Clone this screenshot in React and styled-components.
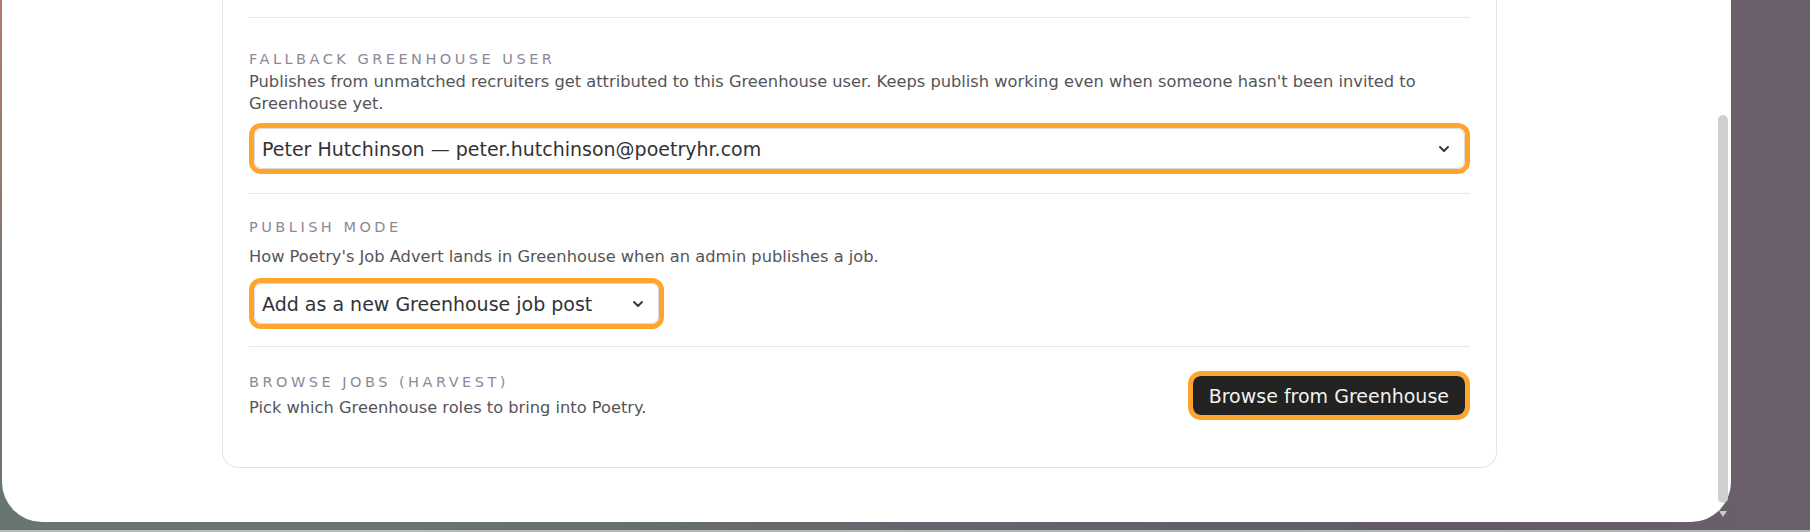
import React from "react";
import styled, { createGlobalStyle } from "styled-components";

const GlobalStyle = createGlobalStyle`
  html, body {
    margin: 0;
    padding: 0;
  }
  body {
    font-family: "DejaVu Sans", "Noto Sans", sans-serif;
    background: #66756f;
    overflow: hidden;
  }
  *, *::before, *::after {
    box-sizing: border-box;
  }
`;

/* desktop wallpaper peeking around the settings sheet */
const Backdrop = styled.div`
  display: flex;
  width: 1810px;
  height: 532px;
  padding: 0 79px 10px 2px;
  background:
    linear-gradient(0deg, rgba(200, 205, 203, 0.8) 0 2px, transparent 2px),
    linear-gradient(180deg, #b47c69 0%, #987a70 30%, #71766f 60%, #66756f 100%) left top / 24px 100% no-repeat,
    linear-gradient(90deg, #67766f 0%, #6a7571 22%, #64626a 58%, #625a66 80%, #6b5f6b 100%);
`;

const Sheet = styled.div`
  flex: 1;
  display: flex;
  background: #ffffff;
  border-radius: 0 0 40px 40px;
`;

const ScrollArea = styled.div`
  flex: 1;
  min-width: 0;
  display: flex;
  justify-content: center;
  align-items: flex-start;
`;

const ScrollTrack = styled.div`
  width: 14px;
  display: flex;
  flex-direction: column;
  align-items: center;
  gap: 8px;
  padding: 115px 2px 0 0;
`;

const ScrollThumb = styled.div`
  width: 10px;
  height: 388px;
  border-radius: 5px;
  background: #cfcfcf;
`;

const ScrollArrow = styled.div`
  width: 0;
  height: 0;
  border-left: 4px solid transparent;
  border-right: 4px solid transparent;
  border-top: 6px solid #c9c9c9;
`;

const Card = styled.div`
  width: 1275px;
  padding: 17px 26px 22px;
  border: 1px solid #e4e4e6;
  border-top: none;
  border-radius: 0 0 16px 16px;
  background: #ffffff;
`;

const Section = styled.section`
  border-top: 1px solid #e6e6e8;
  padding: ${(p) => p.$top}px 0 ${(p) => p.$bottom}px;
`;

const Row = styled.div`
  display: flex;
  align-items: center;
  justify-content: space-between;
  gap: 24px;
`;

const Label = styled.div`
  font-size: 14.5px;
  line-height: 18px;
  letter-spacing: 3.5px;
  text-transform: uppercase;
  color: #8b8a96;
`;

const Hint = styled.p`
  margin: ${(p) => p.$mt}px 0 0;
  font-size: 16.25px;
  line-height: 22px;
  color: #555558;
`;

const Ring = styled.div`
  width: ${(p) => p.$width || "100%"};
  margin-top: ${(p) => p.$mt || 0}px;
  border: 5px solid #ffa42d;
  border-radius: ${(p) => p.$radius || 12}px;
  flex-shrink: 0;
`;

const Combo = styled.button`
  display: flex;
  align-items: center;
  justify-content: space-between;
  width: 100%;
  height: 41px;
  padding: 0 14px 0 7px;
  border: 1px solid #dcdcdf;
  border-radius: 8px;
  background: #ffffff;
  font-family: inherit;
  font-size: 19px;
  color: #333336;
  text-align: left;
  cursor: pointer;
`;

const Chevron = styled.svg`
  width: 12px;
  height: 8px;
  flex-shrink: 0;
`;

const DarkButton = styled.button`
  display: block;
  height: 39px;
  padding: 0 16px;
  border: none;
  border-radius: 8px;
  background: #222222;
  font-family: inherit;
  font-size: 19px;
  color: #f1f1f1;
  white-space: nowrap;
  cursor: pointer;
`;

function Select({ value }) {
  return (
    <Combo type="button">
      <span>{value}</span>
      <Chevron viewBox="0 0 12 8" aria-hidden="true">
        <path
          d="M2 2l4 4 4-4"
          fill="none"
          stroke="#3a3a3d"
          strokeWidth="2"
          strokeLinecap="round"
          strokeLinejoin="round"
        />
      </Chevron>
    </Combo>
  );
}

export default function App() {
  return (
    <>
      <GlobalStyle />
      <Backdrop>
        <Sheet>
          <ScrollArea>
            <Card>
              <Section $top={32} $bottom={19}>
                <Label>Fallback Greenhouse user</Label>
                <Hint $mt={3}>
                  Publishes from unmatched recruiters get attributed to this Greenhouse user. Keeps
                  publish working even when someone hasn't been invited to Greenhouse yet.
                </Hint>
                <Ring $mt={8}>
                  <Select value="Peter Hutchinson — peter.hutchinson@poetryhr.com" />
                </Ring>
              </Section>

              <Section $top={24} $bottom={17}>
                <Label>Publish mode</Label>
                <Hint $mt={10}>
                  How Poetry's Job Advert lands in Greenhouse when an admin publishes a job.
                </Hint>
                <Ring $mt={10} $width="415px">
                  <Select value="Add as a new Greenhouse job post" />
                </Ring>
              </Section>

              <Section $top={24} $bottom={25}>
                <Row>
                  <div>
                    <Label>Browse jobs (Harvest)</Label>
                    <Hint $mt={6}>Pick which Greenhouse roles to bring into Poetry.</Hint>
                  </div>
                  <Ring $width="auto" $radius={13}>
                    <DarkButton type="button">Browse from Greenhouse</DarkButton>
                  </Ring>
                </Row>
              </Section>
            </Card>
          </ScrollArea>
          <ScrollTrack>
            <ScrollThumb />
            <ScrollArrow />
          </ScrollTrack>
        </Sheet>
      </Backdrop>
    </>
  );
}
